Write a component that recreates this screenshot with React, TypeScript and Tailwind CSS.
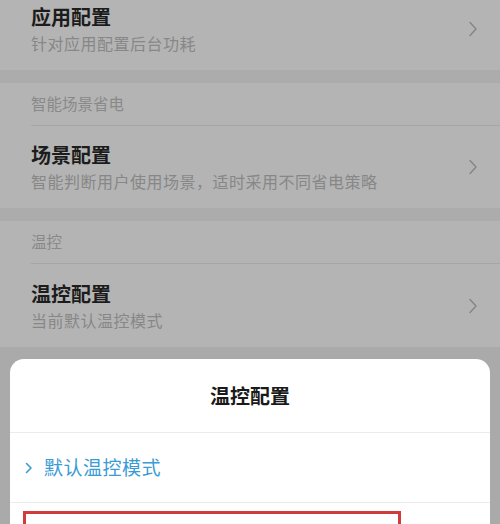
import React from "react";

const font = { fontFamily: '"Noto Sans CJK SC", "Noto Sans", sans-serif' };

function Chevron() {
  return (
    <svg width="10" height="16" viewBox="0 0 10 16" className="shrink-0">
      <polyline points="2,1.5 8,8 2,14.5" fill="none" stroke="#858585" strokeWidth="1.4" strokeLinecap="round" strokeLinejoin="round" />
    </svg>
  );
}

function Row({ title, sub, extra = "" }: { title: string; sub: string; extra?: string }) {
  return (
    <div className={`flex items-center shrink-0 pl-[31px] pr-[22px] ${extra}`}>
      <div className="flex-1 flex flex-col">
        <div className="text-[20px] leading-[24px] font-bold text-[#1c1c1c]">{title}</div>
        <div className="text-[16px] leading-[20px] text-[#878787] mt-[4px] tracking-[0.5px]">{sub}</div>
      </div>
      <Chevron />
    </div>
  );
}

function Header({ text }: { text: string }) {
  return (
    <div className="h-[42px] shrink-0 flex items-center pl-[31px] text-[15.5px] text-[#898989]">{text}</div>
  );
}

export default function App() {
  return (
    <div style={font} className="w-[500px] h-[524px] overflow-hidden bg-[#b4b4b4] flex flex-col">
      <Row title="应用配置" sub="针对应用配置后台功耗" extra="h-[82px] -mt-[12px]" />
      <div className="h-[13px] bg-[#acacac] shrink-0" />
      <Header text="智能场景省电" />
      <div className="h-px bg-[#a6a6a6] ml-[31px] shrink-0" />
      <Row title="场景配置" sub="智能判断用户使用场景，适时采用不同省电策略" extra="h-[82px]" />
      <div className="h-[13px] bg-[#acacac] shrink-0" />
      <Header text="温控" />
      <div className="h-px bg-[#a6a6a6] ml-[31px] shrink-0" />
      <Row title="温控配置" sub="当前默认温控模式" extra="h-[83px]" />
      <div className="flex-1 bg-[#aaaaaa] pt-[12px] px-[10px]">
        <div className="bg-white rounded-t-[14px] h-full flex flex-col">
          <div className="h-[73px] flex items-center justify-center text-[20px] font-bold text-[#1a1a1a] shrink-0">
            温控配置
          </div>
          <div className="h-px bg-[#ececec] shrink-0" />
          <div className="h-[69px] flex items-center pl-[15px] shrink-0">
            <svg width="8" height="12" viewBox="0 0 8 12" className="mr-[11px]">
              <polyline points="1.5,1.5 6,6 1.5,10.5" fill="none" stroke="#3a9bd5" strokeWidth="1.6" strokeLinecap="round" strokeLinejoin="round" />
            </svg>
            <span className="text-[19px] text-[#3a9bd5] tracking-[0.5px]">默认温控模式</span>
          </div>
          <div className="h-px bg-[#ececec] shrink-0" />
          <div className="pt-[8px] pl-[13px]">
            <div className="w-[378px] h-[60px] border-[3px] border-[#d03b3b]" />
          </div>
        </div>
      </div>
    </div>
  );
}
